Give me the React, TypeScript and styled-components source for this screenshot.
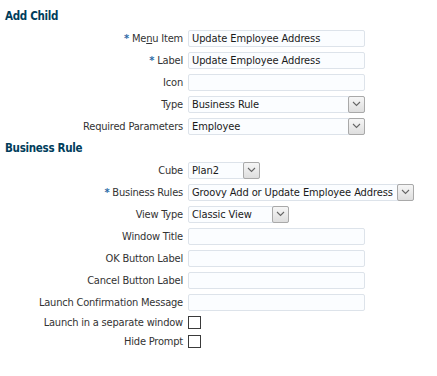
import styled, { createGlobalStyle } from "styled-components";

const GlobalStyle = createGlobalStyle`
  body {
    margin: 0;
    background: #ffffff;
    font-family: "DejaVu Sans Condensed", "DejaVu Sans", sans-serif;
    font-size: 11px;
    color: #333333;
  }
`;

const Chevron: React.FC = () => (
  <svg width="9" height="6" viewBox="0 0 9 6">
    <path d="M1 1 L4.5 4.5 L8 1" fill="none" stroke="#666" strokeWidth="1.1" />
  </svg>
);

type FieldProps = { label: string; required?: boolean; accessKey?: number };

const FieldLabel: React.FC<FieldProps> = ({ label, required, accessKey }) => {
  let text: React.ReactNode = label;
  if (accessKey !== undefined) {
    text = (
      <>
        {label.slice(0, accessKey)}
        <u>{label[accessKey]}</u>
        {label.slice(accessKey + 1)}
      </>
    );
  }
  return (
    <Label>
      {required && <Star>*</Star>}
      {text}
    </Label>
  );
};

const Select: React.FC<{ value: string; width?: number }> = ({ value, width }) => (
  <SelectBox style={width ? { width } : undefined}>
    <SelectText>{value}</SelectText>
    <DropButton>
      <Chevron />
    </DropButton>
  </SelectBox>
);

const App: React.FC = () => {
  return (
    <Wrapper>
      <GlobalStyle />
      <SectionTitle first>Add Child</SectionTitle>
      <Form>
        <FieldLabel label="Menu Item" required accessKey={2} />
        <Cell>
          <TextInput>Update Employee Address</TextInput>
        </Cell>
        <FieldLabel label="Label" required />
        <Cell>
          <TextInput>Update Employee Address</TextInput>
        </Cell>
        <FieldLabel label="Icon" />
        <Cell>
          <TextInput />
        </Cell>
        <FieldLabel label="Type" />
        <Cell>
          <Select value="Business Rule" width={177} />
        </Cell>
        <FieldLabel label="Required Parameters" />
        <Cell>
          <Select value="Employee" width={177} />
        </Cell>
      </Form>
      <SectionTitle>Business Rule</SectionTitle>
      <Form>
        <FieldLabel label="Cube" />
        <Cell>
          <Select value="Plan2" width={72} />
        </Cell>
        <FieldLabel label="Business Rules" required />
        <Cell>
          <Select value="Groovy Add or Update Employee Address" />
        </Cell>
        <FieldLabel label="View Type" />
        <Cell>
          <Select value="Classic View" width={101} />
        </Cell>
        <FieldLabel label="Window Title" />
        <Cell>
          <TextInput />
        </Cell>
        <FieldLabel label="OK Button Label" />
        <Cell>
          <TextInput />
        </Cell>
        <FieldLabel label="Cancel Button Label" />
        <Cell>
          <TextInput />
        </Cell>
        <FieldLabel label="Launch Confirmation Message" />
        <Cell>
          <TextInput />
        </Cell>
      </Form>
      <CheckForm>
        <FieldLabel label="Launch in a separate window" />
        <Cell>
          <Checkbox />
        </Cell>
        <FieldLabel label="Hide Prompt" />
        <Cell>
          <Checkbox />
        </Cell>
      </CheckForm>
    </Wrapper>
  );
};

const Wrapper = styled.div`
  width: 437px;
  height: 376px;
  overflow: hidden;
`;

const SectionTitle = styled.div<{ first?: boolean }>`
  height: 22px;
  line-height: 22px;
  margin-top: ${(p) => (p.first ? "5px" : "0")};
  padding-left: 5px;
  font-weight: bold;
  font-size: 11.5px;
  letter-spacing: -0.3px;
  color: #003d5b;
`;

const Form = styled.div`
  display: grid;
  grid-template-columns: 183px max-content;
  column-gap: 5px;
  grid-auto-rows: 22px;
`;

const CheckForm = styled(Form)`
  grid-auto-rows: 19px;
`;

const Label = styled.div`
  display: flex;
  align-items: center;
  justify-content: flex-end;
  white-space: nowrap;
  letter-spacing: -0.2px;
  color: #333333;
`;

const Star = styled.span`
  color: #2d6ba6;
  margin-right: 3px;
  font-weight: bold;
`;

const Cell = styled.div`
  display: flex;
  align-items: center;
`;

const TextInput = styled.div`
  box-sizing: border-box;
  width: 177px;
  height: 17px;
  line-height: 15px;
  padding: 0 3px;
  border: 1px solid #dde3ea;
  border-radius: 2px;
  background: #fbfdff;
  color: #1a1a1a;
  white-space: nowrap;
  letter-spacing: -0.1px;
`;

const SelectBox = styled.div`
  box-sizing: border-box;
  display: flex;
  align-items: stretch;
  height: 17px;
  border: 1px solid #dde3ea;
  border-radius: 2px;
  background: #fbfdff;
`;

const SelectText = styled.div`
  flex: 1;
  padding: 0 4px 0 3px;
  line-height: 15px;
  color: #1a1a1a;
  white-space: nowrap;
  letter-spacing: -0.1px;
`;

const DropButton = styled.div`
  box-sizing: border-box;
  width: 17px;
  margin: -1px -1px -1px 0;
  border: 1px solid #a9a9a9;
  border-radius: 2px;
  background: linear-gradient(#f6f6f6, #dedede);
  display: flex;
  align-items: center;
  justify-content: center;
`;

const Checkbox = styled.div`
  box-sizing: border-box;
  width: 13px;
  height: 13px;
  border: 1px solid #3a3a3a;
  background: #ffffff;
`;

export default App;
